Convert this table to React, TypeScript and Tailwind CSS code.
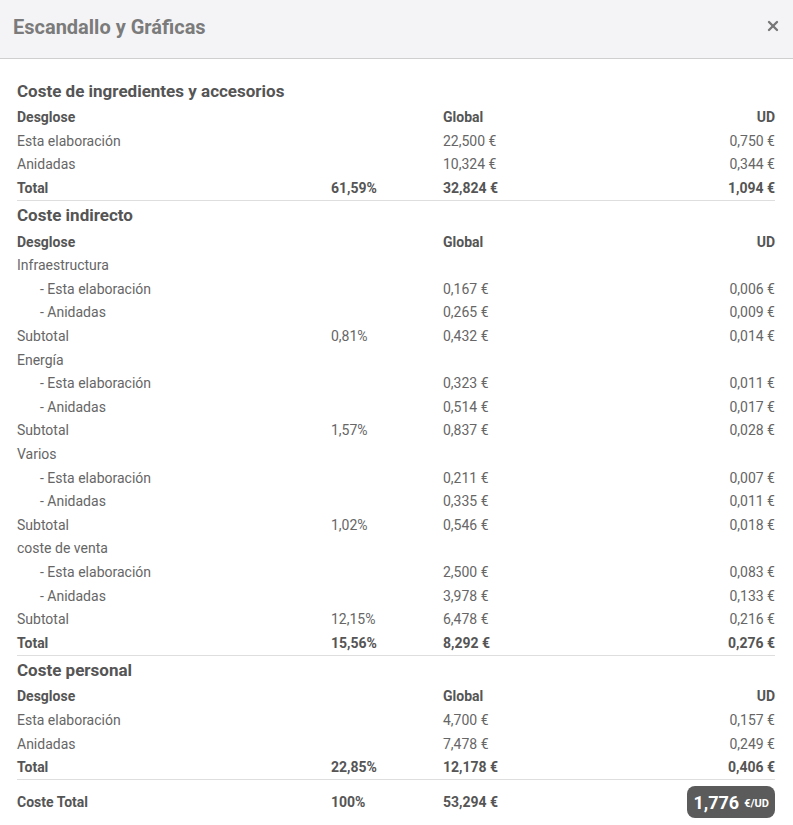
import { X } from "lucide-react"

type Row = {
  label: string
  pct?: string
  global?: string
  ud?: string
  bold?: boolean
  indent?: boolean
  line?: boolean
}

type Section = { title: string; rows: Row[] }

const head: Row = { label: "Desglose", global: "Global", ud: "UD", bold: true }

const sections: Section[] = [
  {
    title: "Coste de ingredientes y accesorios",
    rows: [
      head,
      { label: "Esta elaboración", global: "22,500 €", ud: "0,750 €" },
      { label: "Anidadas", global: "10,324 €", ud: "0,344 €" },
      { label: "Total", pct: "61,59%", global: "32,824 €", ud: "1,094 €", bold: true, line: true },
    ],
  },
  {
    title: "Coste indirecto",
    rows: [
      head,
      { label: "Infraestructura" },
      { label: "- Esta elaboración", global: "0,167 €", ud: "0,006 €", indent: true },
      { label: "- Anidadas", global: "0,265 €", ud: "0,009 €", indent: true },
      { label: "Subtotal", pct: "0,81%", global: "0,432 €", ud: "0,014 €" },
      { label: "Energía" },
      { label: "- Esta elaboración", global: "0,323 €", ud: "0,011 €", indent: true },
      { label: "- Anidadas", global: "0,514 €", ud: "0,017 €", indent: true },
      { label: "Subtotal", pct: "1,57%", global: "0,837 €", ud: "0,028 €" },
      { label: "Varios" },
      { label: "- Esta elaboración", global: "0,211 €", ud: "0,007 €", indent: true },
      { label: "- Anidadas", global: "0,335 €", ud: "0,011 €", indent: true },
      { label: "Subtotal", pct: "1,02%", global: "0,546 €", ud: "0,018 €" },
      { label: "coste de venta" },
      { label: "- Esta elaboración", global: "2,500 €", ud: "0,083 €", indent: true },
      { label: "- Anidadas", global: "3,978 €", ud: "0,133 €", indent: true },
      { label: "Subtotal", pct: "12,15%", global: "6,478 €", ud: "0,216 €" },
      { label: "Total", pct: "15,56%", global: "8,292 €", ud: "0,276 €", bold: true, line: true },
    ],
  },
  {
    title: "Coste personal",
    rows: [
      head,
      { label: "Esta elaboración", global: "4,700 €", ud: "0,157 €" },
      { label: "Anidadas", global: "7,478 €", ud: "0,249 €" },
      { label: "Total", pct: "22,85%", global: "12,178 €", ud: "0,406 €", bold: true, line: true },
    ],
  },
]

function TableRow({ row }: { row: Row }) {
  return (
    <div
      className={
        "grid grid-cols-[281px_80px_1fr_1fr] h-[23.6px] items-center text-[14px] " +
        (row.bold ? "font-bold text-[#555]" : "text-[#666]") +
        (row.line ? " border-b border-[#dedede] box-content" : "")
      }
    >
      <div className={row.indent ? "pl-[23px]" : ""}>{row.label}</div>
      <div className="pl-[33px]">{row.pct}</div>
      <div className="pl-[65px]">{row.global}</div>
      <div className="text-right">{row.ud}</div>
    </div>
  )
}

export default function App() {
  return (
    <div className="w-[793px] h-[825px] bg-white overflow-hidden" style={{ fontFamily: "Roboto, sans-serif" }}>
      <div className="h-[58px] bg-[#f4f4f6] border-b border-[#cfcfcf] box-content flex items-center justify-between pl-[13px] pr-[15px]">
        <h2 className="text-[20px] font-bold text-[#7b7b7b] mb-[4px]">Escandallo y Gráficas</h2>
        <X size={16} strokeWidth={3.5} className="text-[#777] mr-[-3px] mb-[6px]" />
      </div>

      <div className="px-[17px] pt-[18px] w-[792px]">
        {sections.map((s) => (
          <div key={s.title}>
            <h3 className="h-[29px] leading-[29px] text-[17px] font-bold text-[#555]">{s.title}</h3>
            {s.rows.map((r, i) => (
              <TableRow key={i} row={r} />
            ))}
          </div>
        ))}

        <div className="grid grid-cols-[281px_80px_1fr_1fr] items-center pt-[6px] text-[14px] font-bold text-[#555]">
          <div>Coste Total</div>
          <div className="pl-[33px]">100%</div>
          <div className="pl-[65px]">53,294 €</div>
          <div className="flex justify-end">
            <span className="inline-flex gap-[5px] h-[32px] items-center rounded-[8px] bg-[#5b5b5b] px-[6px] text-white">
              <span className="text-[18px] font-bold">1,776</span>
              <span className="text-[11px] font-bold pt-[3px]">€/UD</span>
            </span>
          </div>
        </div>
      </div>
    </div>
  )
}
